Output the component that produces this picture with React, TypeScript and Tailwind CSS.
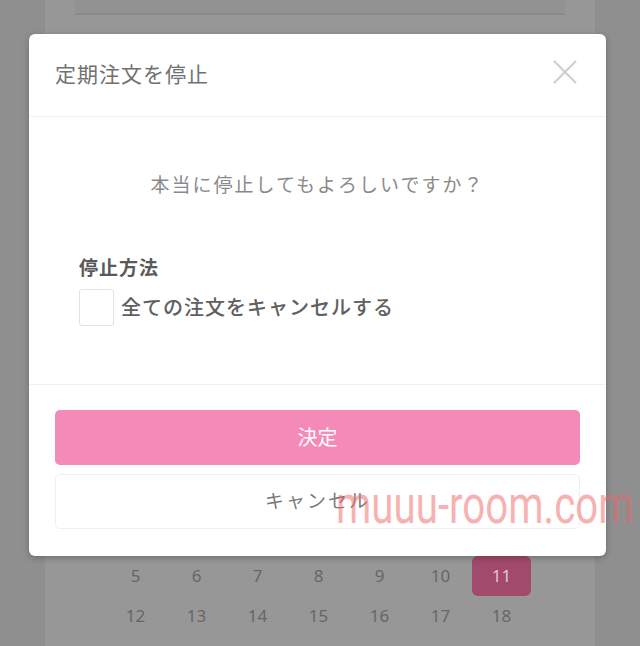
const days = [
  [5, 6, 7, 8, 9, 10, 11],
  [12, 13, 14, 15, 16, 17, 18],
];

function Calendar() {
  return (
    <div className="grid grid-cols-7 w-[427px] ml-[60px] mt-[541px]">
      {days.flat().map((d) => (
        <div
          key={d}
          className={`h-10 flex items-center justify-center text-[17px] ${
            d === 11
              ? 'bg-[#a14a6c] text-[#e4c4d0] rounded-md mx-[1px]'
              : 'text-[#666]'
          }`}
        >
          {d}
        </div>
      ))}
    </div>
  );
}

export default function App() {
  return (
    <div
      className="relative w-[640px] h-[646px] overflow-hidden bg-[#8f8f8f]"
      style={{ fontFamily: '"Noto Sans", "Noto Sans CJK JP", sans-serif' }}
    >
      {/* page behind the overlay */}
      <div className="mx-[45px] w-[550px] h-full bg-[#979797] overflow-hidden">
        <div className="mx-[30px] h-[15px] bg-[#929292] border-b-2 border-[#8a8a8a]" />
        <Calendar />
      </div>

      {/* modal */}
      <div className="absolute left-[29px] top-[34px] w-[577px] h-[522px] bg-white rounded-md flex flex-col shadow-[0_2px_6px_rgba(0,0,0,0.25)]">
        <div className="h-[83px] flex items-center justify-between pl-[26px] pr-[28px] border-b border-[#f0f0f0]">
          <h2 className="text-[21px] text-[#717171] tracking-[1px]">定期注文を停止</h2>
          <svg width="26" height="26" viewBox="0 0 26 26" className="mt-[-6px]">
            <path d="M2 2 L24 24 M24 2 L2 24" stroke="#cfcfcf" strokeWidth="2.2" />
          </svg>
        </div>

        <div className="h-[268px] border-b border-[#f0f0f0] px-[50px]">
          <p className="text-center text-[19px] text-[#8a8a8a] tracking-[2px] mt-[54px]">
            本当に停止してもよろしいですか？
          </p>
          <p className="text-[19px] font-bold text-[#5a5a5a] mt-[54px] tracking-[1px]">停止方法</p>
          <label className="flex items-center gap-[7px] mt-[7px]">
            <span className="w-[35px] h-[37px] border border-[#e2e2e2] rounded-[3px] bg-white" />
            <span className="text-[20px] font-medium text-[#606060] tracking-[1px]">
              全ての注文をキャンセルする
            </span>
          </label>
        </div>

        <div className="flex-1 px-[26px] pt-[25px] flex flex-col gap-[9px]">
          <button className="h-[55px] w-full rounded-[5px] bg-[#f48ab7] text-white text-[20px]">
            決定
          </button>
          <button className="h-[55px] w-full rounded-[5px] bg-white border border-[#f0f0f0] text-[#7a7a7a] text-[19px] tracking-[2px]">
            キャンセル
          </button>
        </div>
      </div>

      {/* watermark */}
      <div
        className="absolute left-[336px] top-[479px] whitespace-nowrap text-[53px] leading-none text-[rgba(240,100,100,0.5)] origin-left scale-x-[0.76]"
        style={{ fontFamily: 'Roboto, sans-serif' }}
      >
        muuu-room.com
      </div>
    </div>
  );
}
